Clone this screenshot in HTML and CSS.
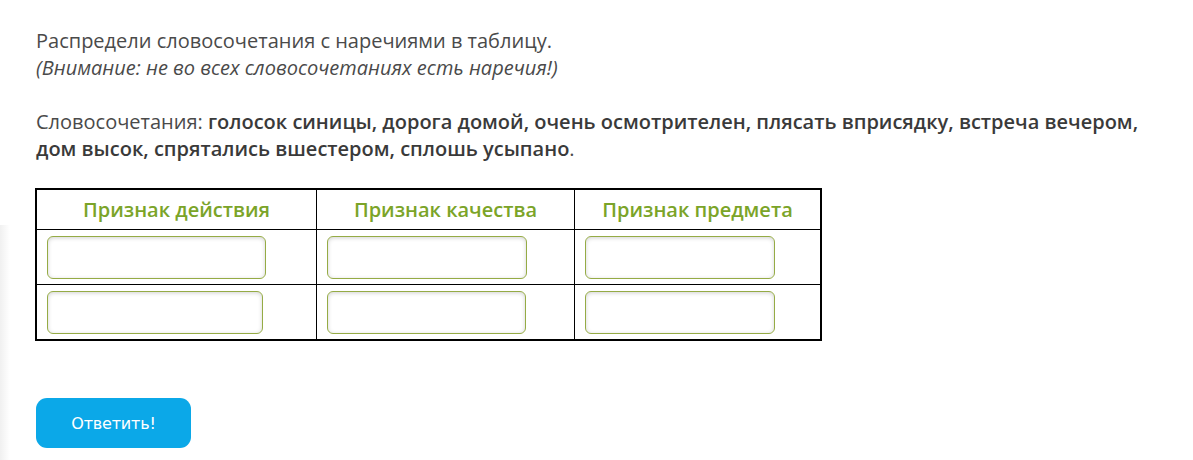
FILE: index.html
```html
<!DOCTYPE html>
<html lang="ru">
<head>
<meta charset="utf-8">
<title>Задание</title>
<link rel="stylesheet" href="styles.css">
</head>
<body>
<div class="edge"></div>
<main class="task">
  <p class="intro">Распредели словосочетания с наречиями в таблицу.<br><em>(Внимание: не во всех словосочетаниях есть наречия!)</em></p>
  <p class="words">Словосочетания: <b>голосок синицы, дорога домой, очень осмотрителен, плясать вприсядку, встреча вечером, дом высок, спрятались вшестером, сплошь усыпано</b>.</p>
  <table class="grid">
    <thead>
      <tr>
        <th class="c1">Признак действия</th>
        <th class="c2">Признак качества</th>
        <th class="c3">Признак предмета</th>
      </tr>
    </thead>
    <tbody>
      <tr>
        <td><div class="slot w219"></div></td>
        <td><div class="slot w200"></div></td>
        <td><div class="slot w190"></div></td>
      </tr>
      <tr>
        <td><div class="slot w216"></div></td>
        <td><div class="slot w199"></div></td>
        <td><div class="slot w190"></div></td>
      </tr>
    </tbody>
  </table>
  <button class="answer" type="button">Ответить!</button>
</main>
</body>
</html>
```

FILE: styles.css
```css
html, body {
  margin: 0;
  padding: 0;
  background: #fff;
}
body {
  font-family: "Open Sans", "DejaVu Sans", sans-serif;
  color: #4a4a4a;
  font-size: 20px;
  line-height: 27px;
  position: relative;
  height: 460px;
  overflow: hidden;
}
.edge {
  position: absolute;
  left: 0;
  top: 225px;
  width: 10px;
  height: 240px;
  background: linear-gradient(to right, rgba(0,0,0,0.06), rgba(0,0,0,0));
}
.task {
  padding: 27px 36px 0 36px;
}
.intro {
  margin: 0 0 27px 0;
}
.intro em {
  font-style: italic;
}
.words {
  margin: 0 0 26px 0;
  max-width: 1120px;
}
.words b {
  font-weight: 600;
  color: #3a3a3a;
}
.grid {
  border-collapse: collapse;
  border: 2px solid #000;
  margin-left: -1px;
}
.grid th, .grid td {
  border: 1px solid #000;
  padding: 0;
}
.grid th {
  height: 39px;
  color: #7ba428;
  font-weight: 600;
  font-size: 20px;
  text-align: center;
  vertical-align: middle;
}
.grid .c1 { width: 279px; }
.grid .c2 { width: 257px; }
.grid .c3 { width: 245px; }
.grid td {
  height: 54px;
  vertical-align: top;
}
.slot {
  margin: 6px 0 0 10px;
  border: 1px solid #95ab45;
  border-radius: 6px;
  background: #fff;
  box-shadow: inset 0 1px 4px rgba(0,0,0,0.18);
  box-sizing: border-box;
  height: 43px;
}
.w219 { width: 219px; }
.w216 { width: 216px; }
.w200 { width: 200px; }
.w199 { width: 199px; }
.w190 { width: 190px; }
.answer {
  display: block;
  margin-top: 57px;
  width: 155px;
  height: 50px;
  border: none;
  border-radius: 11px;
  background: #0ba8e8;
  color: #fff;
  font-family: "DejaVu Sans", "Liberation Sans", sans-serif;
  font-size: 16px;
  letter-spacing: -0.2px;
  cursor: pointer;
}
```
